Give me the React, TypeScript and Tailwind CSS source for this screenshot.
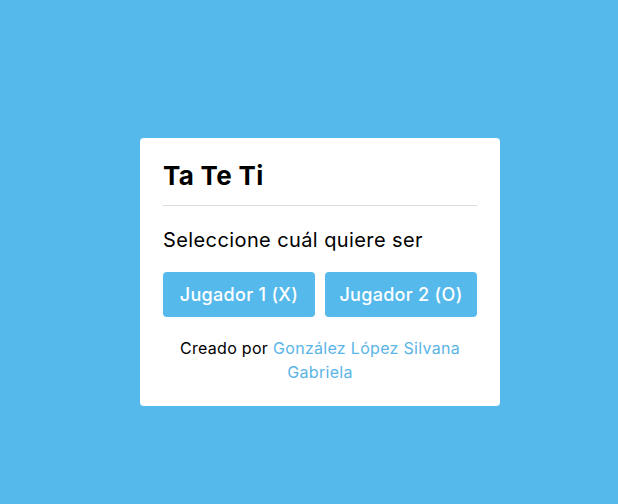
export default function App() {
    return (
        <div className="min-h-screen w-full bg-[#56b9eb] pt-[138px] pl-[140px] font-['Inter','Noto_Sans',sans-serif]">
            <div className="w-[360px] bg-white rounded-[4px] px-[23px] pt-[20px] pb-[22px]">
                <h1 className="h-[36px] leading-[36px] text-[26px] font-bold tracking-[0.3px] text-black">Ta Te Ti</h1>
                <div className="mt-[11px] border-b border-[#dcdcdc]"></div>
                <p className="mt-[20px] h-[28px] leading-[28px] text-[20px] tracking-[0.4px] text-black">Seleccione cuál quiere ser</p>
                <div className="mt-[18px] flex gap-[10px]">
                    <button className="flex-1 h-[45px] rounded-[4px] bg-[#56b9eb] text-white text-[18px] font-medium tracking-[0.3px]">Jugador 1 (X)</button>
                    <button className="flex-1 h-[45px] rounded-[4px] bg-[#56b9eb] text-white text-[18px] font-medium tracking-[0.3px]">Jugador 2 (O)</button>
                </div>
                <p className="mt-[19px] text-center text-[16px] leading-[24px] tracking-[0.3px] text-black">
                    Creado por <span className="text-[#5ab5e6]">González López Silvana Gabriela</span>
                </p>
            </div>
        </div>
    );
}
